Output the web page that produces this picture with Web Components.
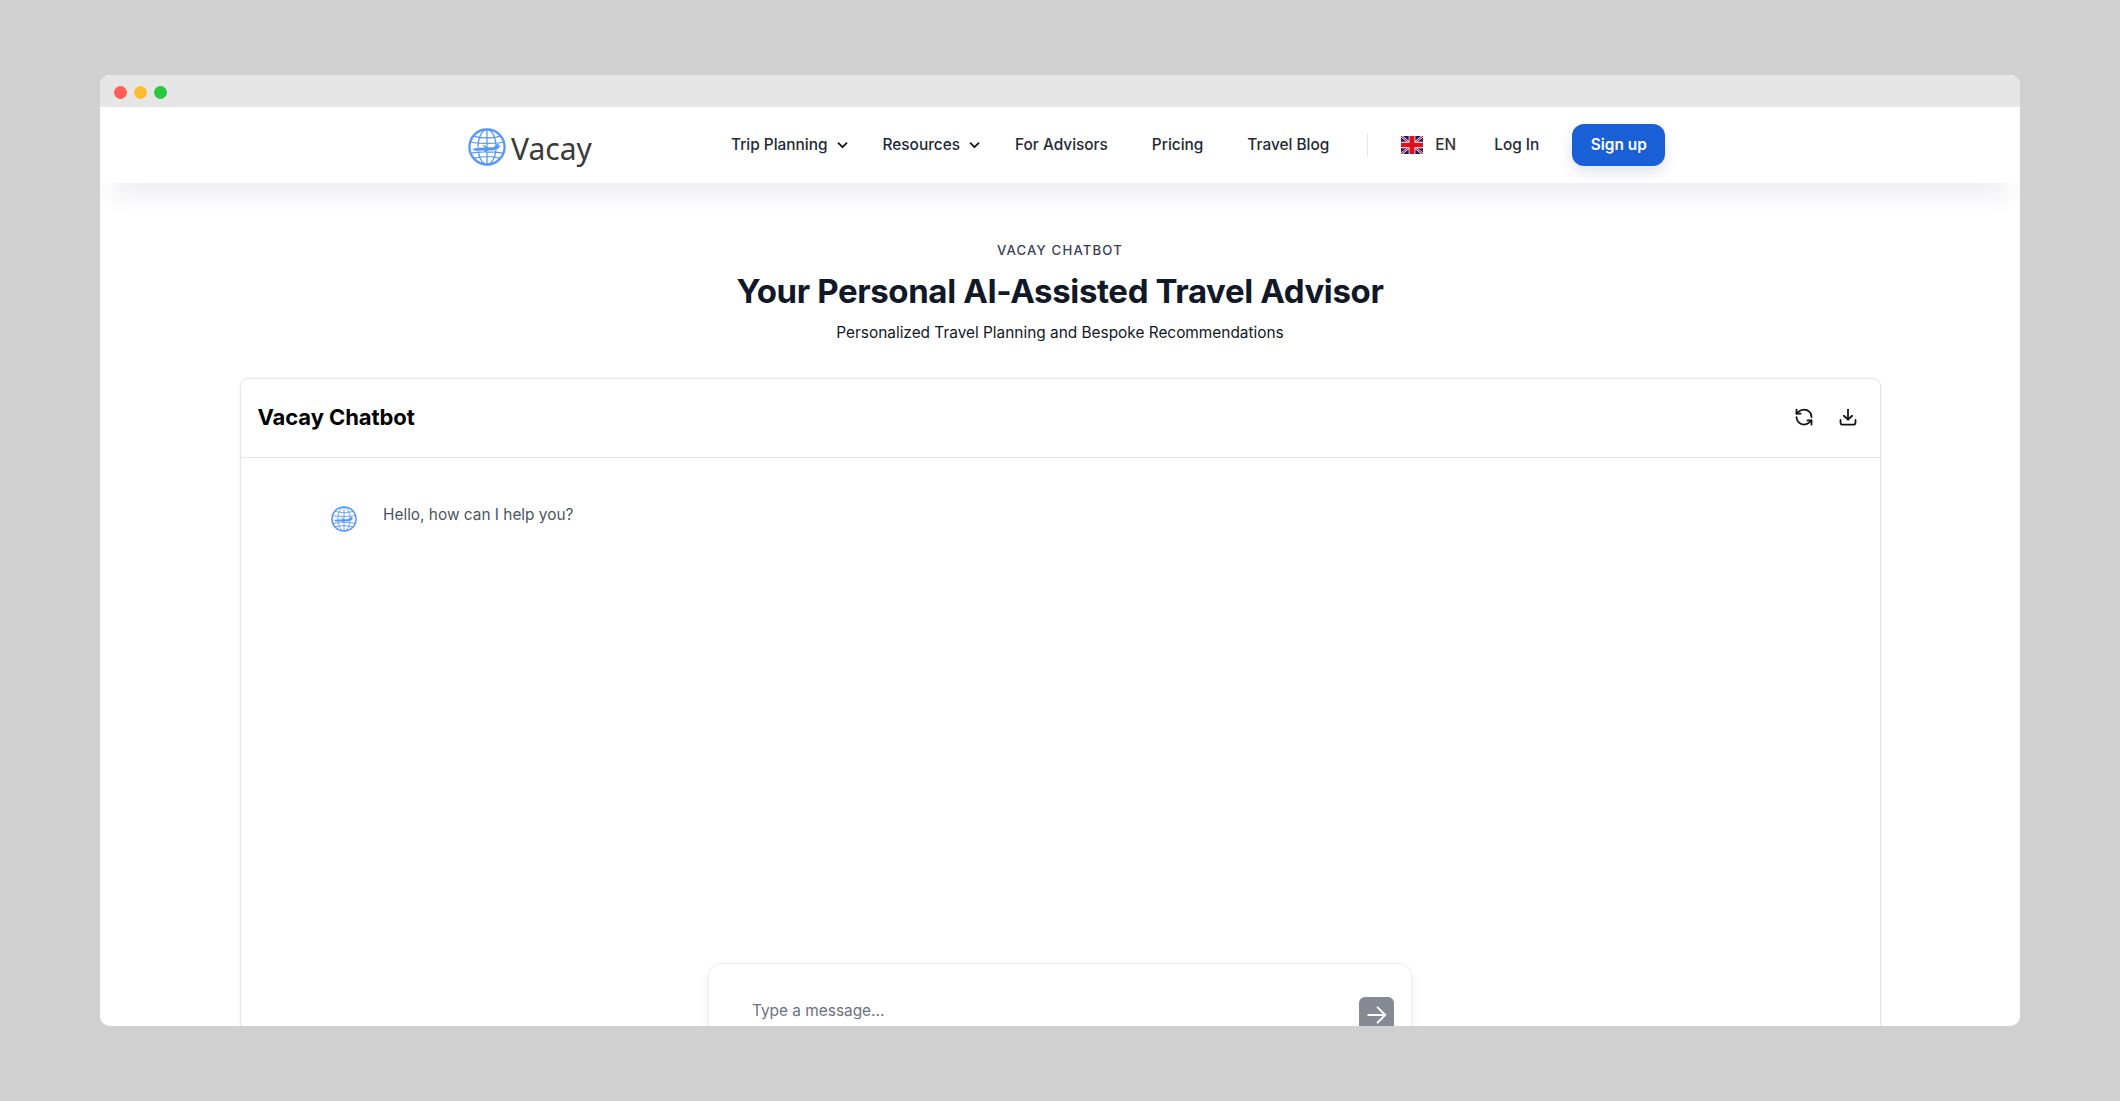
<!DOCTYPE html>
<html lang="en"><head><meta charset="utf-8"><title>Vacay Chatbot</title>
<style>
html,body{margin:0;padding:0;background:#d0d0d0;font-family:Inter,"Liberation Sans",sans-serif;}
body{height:1101px;overflow:hidden;}
</style></head><body>
<app-window>
  <site-nav></site-nav>
  <hero-head eyebrow="VACAY CHATBOT" title-text="Your Personal AI-Assisted Travel Advisor" sub="Personalized Travel Planning and Bespoke Recommendations"></hero-head>
  <chat-card card-title="Vacay Chatbot">
    <chat-message>Hello, how can I help you?</chat-message>
    <chat-input slot="footer" placeholder="Type a message..."></chat-input>
  </chat-card>
</app-window>
<script>
const globe=`<svg viewBox="0 0 40 40" width="100%" height="100%" fill="none" stroke="#5596fb" aria-hidden="true" style="display:block">
<circle cx="20" cy="20" r="18.500" stroke-width="2.400"/>
<ellipse cx="20" cy="20" rx="9.500" ry="18.200" stroke-width="1.300"/>
<path d="M20 2v36M6 8.500Q20 12.500 34 8.500M2.500 15Q20 17.500 37.500 15M3 26.500Q20 24 37 26.500M6 32Q20 28 34 32" stroke-width="1.300"/>
<path d="M4.500 22.500c1.200-1.300 4-1.900 7.500-2l5.500-.2-2.800-2.100 2.600-.3 4.800 2.300 5.200-.5 3.500-3.600 2.200-.6-.7 3.200 3-1-2.200 3.100c-1.400 1.800-4.200 2.700-7.500 2.900l-4 .2-3.400 1.900-2.600.2 1.400-2-6.800.2c-3.200.1-5.100-.6-5.700-2.200z" fill="#5596fb" stroke="#fff" stroke-width=".5"/>
</svg>`;
function def(name,css,html){
  customElements.define(name,class extends HTMLElement{
    constructor(){super();this.attachShadow({mode:"open"});}
    connectedCallback(){
      const h=typeof html==="function"?html(this):html;
      this.shadowRoot.innerHTML=`<style>${css}</style>${h}`;
    }
  });
}
def("globe-logo",`:host{display:block;width:var(--size,38px);height:var(--size,38px);flex:none}`,globe);
def("app-window",`
:host{display:block;position:relative;margin:75px 100px 0;width:1920px;height:951px;background:#fff;border-radius:10px;overflow:hidden;font-family:Inter,"Liberation Sans",sans-serif}
.bar{height:32px;background:#e6e6e6;display:flex;align-items:center;gap:7px;padding:2px 0 0 14px;box-sizing:border-box}
.bar i{width:13px;height:13px;border-radius:50%;display:block}
`,`<div class="bar"><i style="background:#ff5f57"></i><i style="background:#febc2e"></i><i style="background:#28c840"></i></div><slot></slot>`);
def("nav-link",`
:host{display:inline-flex;align-items:center;font:500 15.4px/20px Inter,"Liberation Sans",sans-serif;color:#1f2937;white-space:nowrap}
svg{margin-left:7px}
`,el=>`<slot></slot>${el.hasAttribute("caret")?`<svg width="15" height="14" viewBox="0 0 15 14" fill="none" stroke="#111827" stroke-width="1.900" stroke-linecap="round" stroke-linejoin="round"><path d="M3.500 5.200 7.500 9.200 11.500 5.200"/></svg>`:""}`);
def("site-nav",`
:host{display:flex;position:relative;z-index:2;height:76px;align-items:center;background:#fff;box-shadow:0 24px 28px -14px rgba(60,50,110,.10);padding-left:368px;box-sizing:border-box}
.logo{display:flex;align-items:center;gap:5px;width:263px;position:relative;top:2px}
.logo span{font:400 30px/38px "Noto Sans","Open Sans",sans-serif;color:#3a3a3d;position:relative;top:2px}
.links{display:flex;align-items:center}
.div{width:1px;height:24px;background:#e5e7eb;margin:0 33px 0 38px}
.lang{display:flex;align-items:center;gap:12px;font:500 15.4px/20px Inter,"Liberation Sans",sans-serif;color:#333;margin-right:38px}
.btn{height:42px;width:93px;border-radius:12px;background:#195fd6;color:#fff;font:600 15.4px/42px Inter,"Liberation Sans",sans-serif;text-align:center;margin-left:33px;box-shadow:0 6px 14px rgba(25,60,130,.14)}
`,`<div class="logo"><globe-logo></globe-logo><span>Vacay</span></div>
<div class="links">
<nav-link caret style="margin-right:33px">Trip Planning</nav-link>
<nav-link caret style="margin-right:33px">Resources</nav-link>
<nav-link style="margin-right:44px">For Advisors</nav-link>
<nav-link style="margin-right:44px">Pricing</nav-link>
<nav-link>Travel Blog</nav-link>
<div class="div"></div>
<div class="lang"><svg width="22" height="18" viewBox="0 0 60 40" preserveAspectRatio="none"><rect width="60" height="40" fill="#141a6e"/><path d="M0 0 60 40M60 0 0 40" stroke="#fff" stroke-width="6"/><path d="M0 0 60 40M60 0 0 40" stroke="#d8121f" stroke-width="2.500"/><path d="M30 0V40" stroke="#fff" stroke-width="18"/><path d="M0 20H60" stroke="#fff" stroke-width="14"/><path d="M30 0V40" stroke="#e0101c" stroke-width="14"/><path d="M0 20H60" stroke="#e0101c" stroke-width="10"/></svg>EN</div>
<nav-link>Log In</nav-link>
<div class="btn">Sign up</div>
</div>`);
def("hero-head",`
:host{display:block;text-align:center;padding-top:58px;height:195px;box-sizing:border-box}
.e{font:500 13.2px/18px Inter,"Liberation Sans",sans-serif;letter-spacing:1.150px;color:#374151}
h1{margin:11px 0 0;font:650 33px/42px Inter,"Liberation Sans",sans-serif;color:#111827;letter-spacing:-.38px}
p{margin:10px 0 0;font:400 15.4px/22px Inter,"Liberation Sans",sans-serif;color:#111827}
`,el=>`<div class="e">${el.getAttribute("eyebrow")}</div><h1>${el.getAttribute("title-text")}</h1><p>${el.getAttribute("sub")}</p>`);
def("chat-card",`
:host{display:block;margin:0 139.500px;height:700px;box-sizing:border-box;border:1px solid #e5e7eb;border-radius:8px;background:#fff;box-shadow:0 1px 4px rgba(17,24,39,.05)}
header{height:79px;box-sizing:border-box;border-bottom:1px solid #e5e7eb;display:flex;align-items:center;padding:0 21.500px 2px 17px;gap:24px}
h2{flex:1;margin:0;font:700 22px/28px Inter,"Liberation Sans",sans-serif;color:#000;letter-spacing:-.07px}
svg{display:block}
.body{padding:47px 0 0 90px;height:505px;box-sizing:border-box}
.foot{display:flex;justify-content:center}
`,el=>`<header><h2>${el.getAttribute("card-title")}</h2>
<svg width="20" height="20" viewBox="0 0 24 24" fill="none" stroke="#111" stroke-width="2.100" stroke-linecap="round" stroke-linejoin="round"><path d="M21 12a9 9 0 0 0-9-9 9.750 9.750 0 0 0-6.740 2.740L3 8"/><path d="M3 3v5h5"/><path d="M3 12a9 9 0 0 0 9 9 9.750 9.750 0 0 0 6.740-2.740L21 16"/><path d="M16 16h5v5"/></svg>
<svg width="20" height="20" viewBox="0 0 24 24" fill="none" stroke="#111" stroke-width="2.100" stroke-linecap="round" stroke-linejoin="round"><path d="M12 3V15"/><path d="M7 10.500 12 15l5-4.500"/><path d="M3 15.500V19a2 2 0 0 0 2 2h14a2 2 0 0 0 2-2v-3.500"/></svg>
</header><div class="body"><slot></slot></div><div class="foot"><slot name="footer"></slot></div>`);
def("chat-message",`
:host{display:flex;gap:26.500px;align-items:flex-start;font:400 15.4px/22px Inter,"Liberation Sans",sans-serif;color:#4b5563}
globe-logo{--size:26px;margin-top:1px}
span{position:relative;top:-1px}
`,`<globe-logo></globe-logo><span><slot></slot></span>`);
def("chat-input",`
:host{display:block;width:704px;height:120px;box-sizing:border-box;border:1px solid #eeeef3;border-radius:14px;background:#fff;box-shadow:0 4px 14px rgba(30,30,60,.05);padding:19px 17px 0 24px}
.row{display:flex;height:80px;gap:9px}
.in{width:617px;box-sizing:border-box;border:1px solid #fdfdfd;border-radius:10px;padding:16px 18px 0;font:400 15.4px/22px Inter,"Liberation Sans",sans-serif;color:#6b7280}
.go{width:35px;height:35px;margin-top:14px;border-radius:6px;background:#858a94;display:flex;align-items:center;justify-content:center}
`,el=>`<div class="row"><div class="in">${el.getAttribute("placeholder")}</div><div class="go"><svg width="22" height="22" viewBox="0 0 20 20" fill="none" stroke="#fff" stroke-width="1.700" stroke-linecap="round" stroke-linejoin="round"><path d="M2 10H17.500M10.500 3 17.500 10l-7 7"/></svg></div></div>`);
</script>
</body></html>
